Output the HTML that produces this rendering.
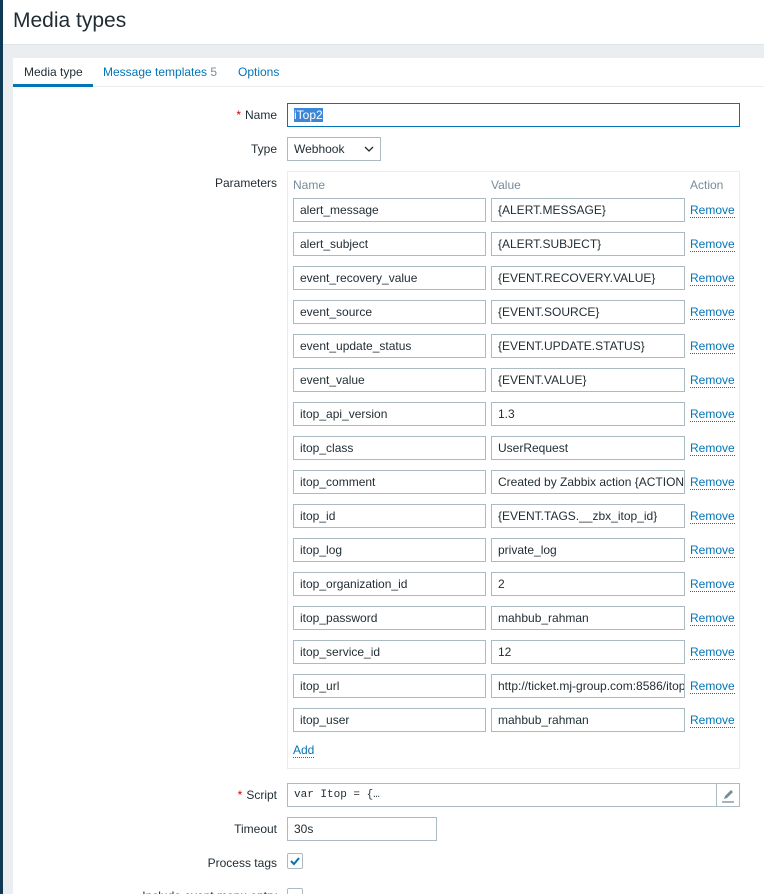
<!DOCTYPE html>
<html><head><meta charset="utf-8"><style>
*{box-sizing:border-box;margin:0;padding:0}
html,body{width:764px;height:894px;overflow:hidden}
body{background:#ebeef0;font-family:"Liberation Sans",sans-serif;font-size:12px;color:#1f2c33;position:relative}
.a{position:absolute}
.side{left:0;top:0;width:3px;height:894px;background:#0e3a55}
.hdr{left:3px;top:0;right:0;height:45px;background:#fff;border-bottom:1px solid #dfe4e7}
h1{position:absolute;left:10px;top:9px;font-size:21px;font-weight:normal;color:#1f2c33}
.panel{left:13px;top:58px;width:751px;height:836px;background:#fff}
.tabs{left:13px;top:58px;width:751px;height:29px;border-bottom:1px solid #ebeef0}
.tab{position:absolute;top:7px;font-size:12px;color:#0275b8}
.lbl{position:absolute;right:487px;font-size:12px;color:#1f2c33;text-align:right;white-space:nowrap}
.req{color:#d40000;margin-right:4px}
.in{position:absolute;height:24px;border:1px solid #acbbc2;background:#fff;padding:0 6px;line-height:22px;font-size:12px;white-space:nowrap;overflow:hidden;color:#1f2c33}
.rm{position:absolute;left:690px;color:#0275b8;border-bottom:1px dotted #0275b8;line-height:14px}
.th{position:absolute;top:178px;color:#768d99}
</style></head><body>
<div class="a side"></div>
<div class="a hdr"><h1>Media types</h1></div>
<div class="a panel"></div>
<div class="a tabs">
<div class="tab" style="left:11px;color:#1f2c33">Media type</div>
<div class="a" style="left:0;top:26px;width:80px;height:3px;background:#0275b8"></div>
<div class="tab" style="left:90px">Message templates <span style="color:#768d99">5</span></div>
<div class="tab" style="left:225px">Options</div>
</div>

<div class="lbl" style="top:108px"><span class="req">*</span>Name</div>
<div class="in" style="left:287px;top:103px;width:453px;border-color:#0275b8;"><span style="background:#3a86d8;color:#fff">iTop2</span></div>

<div class="lbl" style="top:142px">Type</div>
<div class="in" style="left:287px;top:137px;width:94px">Webhook
<svg class="a" style="right:6px;top:8px" width="10" height="7"><path d="M1 1l4 4 4-4" stroke="#1f2c33" fill="none" stroke-width="1.3"/></svg></div>

<div class="lbl" style="top:176px">Parameters</div>
<div class="a" style="left:287px;top:171px;width:453px;height:598px;border:1px solid #ebebeb"></div>
<div class="th" style="left:293px">Name</div>
<div class="th" style="left:491px">Value</div>
<div class="th" style="left:690px">Action</div>

<div id="rows"></div>
<script>
var r=[["alert_message","{ALERT.MESSAGE}"],["alert_subject","{ALERT.SUBJECT}"],["event_recovery_value","{EVENT.RECOVERY.VALUE}"],["event_source","{EVENT.SOURCE}"],["event_update_status","{EVENT.UPDATE.STATUS}"],["event_value","{EVENT.VALUE}"],["itop_api_version","1.3"],["itop_class","UserRequest"],["itop_comment","Created by Zabbix action {ACTION.NAME}"],["itop_id","{EVENT.TAGS.__zbx_itop_id}"],["itop_log","private_log"],["itop_organization_id","2"],["itop_password","mahbub_rahman"],["itop_service_id","12"],["itop_url","http://ticket.mj-group.com:8586/itop/webservices/rest.php"],["itop_user","mahbub_rahman"]];
var h="";r.forEach(function(x,i){var y=198+i*34;
h+='<div class="in" style="left:293px;top:'+y+'px;width:193px">'+x[0]+'</div><div class="in" style="left:491px;top:'+y+'px;width:194px">'+x[1]+'</div><div class="rm" style="top:'+(y+5)+'px">Remove</div>';});
document.getElementById("rows").innerHTML=h;
</script>
<div class="rm" style="left:293px;top:743px">Add</div>

<div class="lbl" style="top:788px"><span class="req">*</span>Script</div>
<div class="in" style="left:287px;top:783px;width:453px;font-family:'Liberation Mono',monospace;font-size:11px">var Itop = {…</div>
<div class="a" style="left:716px;top:783px;width:24px;height:24px;border:1px solid #acbbc2;background:#fff">
<svg width="22" height="22"><path d="M7 15l1-3 6-6 2 2-6 6z" fill="#768d99"/><path d="M5 18h12" stroke="#768d99" stroke-width="1.3"/></svg></div>

<div class="lbl" style="top:822px">Timeout</div>
<div class="in" style="left:287px;top:817px;width:150px">30s</div>

<div class="lbl" style="top:856px">Process tags</div>
<div class="a" style="left:287px;top:853px;width:16px;height:16px;border:1px solid #acbbc2;border-radius:2px;background:#fff">
<svg width="14" height="14"><path d="M3 7l3 3 5-6" stroke="#0275b8" stroke-width="2" fill="none"/></svg></div>

<div class="lbl" style="top:889px">Include event menu entry</div>
<div class="a" style="left:287px;top:888px;width:16px;height:16px;border:1px solid #acbbc2;border-radius:2px;background:#fff"></div>
</body></html>
